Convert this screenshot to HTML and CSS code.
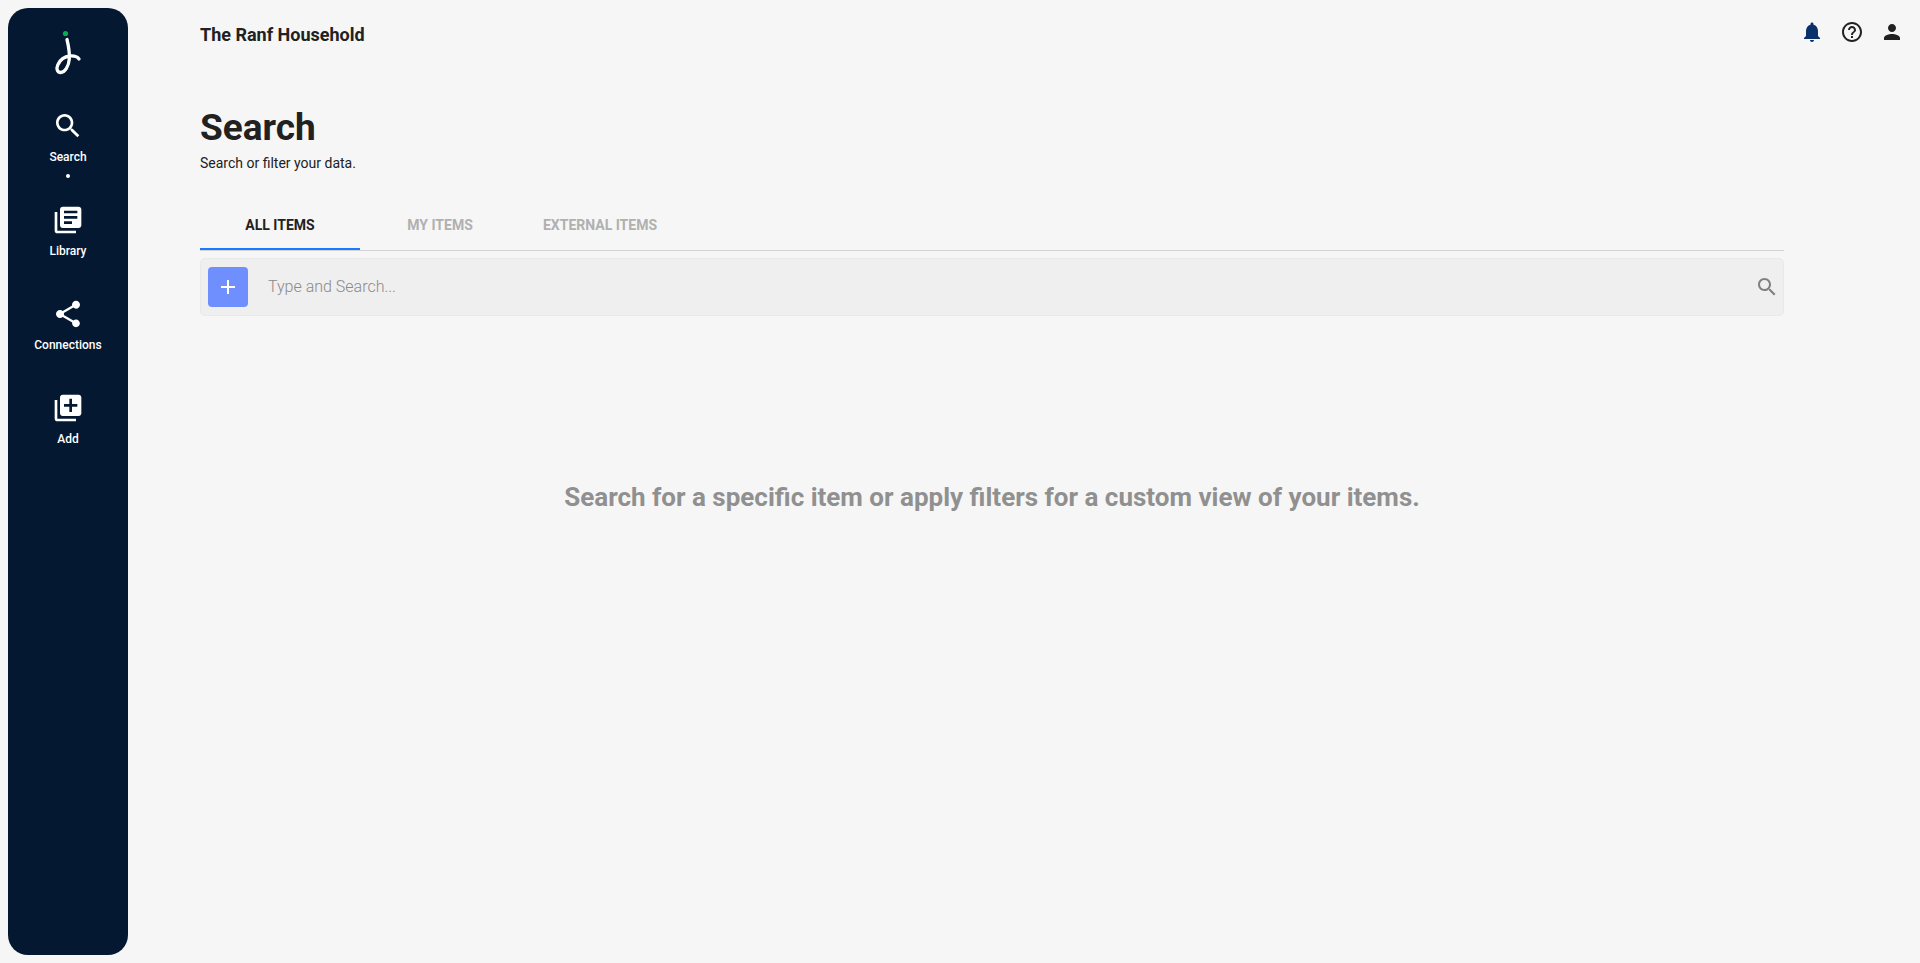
FILE: index.html
```html
<!DOCTYPE html>
<html lang="en">
<head>
<meta charset="utf-8">
<meta name="viewport" content="width=device-width, initial-scale=1">
<title>Search</title>
<link rel="stylesheet" href="styles.css">
</head>
<body>
<div class="app">
  <aside class="sidebar">
    <a class="logo" href="#" aria-label="Home">
      <svg viewBox="0 0 32 50" fill="none">
        <circle cx="13.5" cy="6.5" r="2.6" fill="#00b14f"/>
        <path d="M15 12.5C16.3 18 17.8 25 17.3 32C16.8 39 13 45.5 8.6 45.5C5 45.5 4.2 41.500 5.8 37.800C8 32.800 12.500 29.500 18 29C22 28.700 25.500 30 27 32" stroke="#fff" stroke-width="3.300" stroke-linecap="round"/>
      </svg>
    </a>
    <nav class="nav" aria-label="Main">
      <a class="nav-item active" href="#" aria-current="page">
        <svg class="nav-icon" viewBox="0 0 24 24"><path d="M15.500 14h-.79l-.28-.27C15.410 12.590 16 11.110 16 9.500 16 5.910 13.090 3 9.500 3S3 5.910 3 9.500 5.910 16 9.500 16c1.610 0 3.090-.59 4.230-1.570l.27.28v.79l5 4.990L20.490 19l-4.990-5zm-6 0C7.010 14 5 11.990 5 9.500S7.010 5 9.500 5 14 7.010 14 9.500 11.990 14 9.500 14z"/></svg>
        <span>Search</span>
      </a>
      <a class="nav-item" href="#">
        <svg class="nav-icon" viewBox="0 0 24 24"><path d="M4 6H2v14c0 1.100.9 2 2 2h14v-2H4V6zm16-4H8c-1.100 0-2 .9-2 2v12c0 1.100.9 2 2 2h12c1.100 0 2-.9 2-2V4c0-1.100-.9-2-2-2zm-1 9H9V9h10v2zm-4 4H9v-2h6v2zm4-8H9V5h10v2z"/></svg>
        <span>Library</span>
      </a>
      <a class="nav-item" href="#">
        <svg class="nav-icon" viewBox="0 0 24 24"><path d="M18 16.080c-.76 0-1.440.3-1.960.77L8.910 12.700c.05-.23.09-.46.09-.7s-.04-.47-.09-.7l7.050-4.110c.54.5 1.250.81 2.040.81 1.660 0 3-1.340 3-3s-1.340-3-3-3-3 1.340-3 3c0 .24.04.47.09.7L8.040 9.810C7.500 9.310 6.790 9 6 9c-1.660 0-3 1.340-3 3s1.340 3 3 3c.79 0 1.500-.31 2.040-.81l7.120 4.160c-.05.21-.08.43-.08.65 0 1.610 1.310 2.920 2.920 2.920s2.920-1.310 2.920-2.920-1.310-2.920-2.920-2.920z"/></svg>
        <span>Connections</span>
      </a>
      <a class="nav-item" href="#">
        <svg class="nav-icon" viewBox="0 0 24 24"><path d="M4 6H2v14c0 1.100.9 2 2 2h14v-2H4V6zm16-4H8c-1.100 0-2 .9-2 2v12c0 1.100.9 2 2 2h12c1.100 0 2-.9 2-2V4c0-1.100-.9-2-2-2zm-1 9h-4v4h-2v-4H9V9h4V5h2v4h4v2z"/></svg>
        <span>Add</span>
      </a>
    </nav>
  </aside>
  <div class="page">
    <header class="topbar">
      <div class="household">The Ranf Household</div>
      <div class="actions">
        <button class="icon-button bell" type="button" aria-label="Notifications"><svg viewBox="0 0 24 24"><path d="M12 22c1.100 0 2-.9 2-2h-4c0 1.100.89 2 2 2zm6-6v-5c0-3.070-1.640-5.640-4.500-6.320V4c0-.83-.67-1.500-1.500-1.500s-1.500.67-1.500 1.500v.68C7.630 5.360 6 7.920 6 11v5l-2 2v1h16v-1l-2-2z"/></svg></button>
        <button class="icon-button" type="button" aria-label="Help"><svg viewBox="0 0 24 24"><path d="M11 18h2v-2h-2v2zm1-16C6.480 2 2 6.480 2 12s4.480 10 10 10 10-4.480 10-10S17.520 2 12 2zm0 18c-4.410 0-8-3.590-8-8s3.590-8 8-8 8 3.590 8 8-3.590 8-8 8zm0-14c-2.210 0-4 1.790-4 4h2c0-1.100.9-2 2-2s2 .9 2 2c0 2-3 1.750-3 5h2c0-2.250 3-2.500 3-5 0-2.210-1.790-4-4-4z"/></svg></button>
        <button class="icon-button" type="button" aria-label="Account"><svg viewBox="0 0 24 24"><path d="M12 12c2.210 0 4-1.790 4-4s-1.790-4-4-4-4 1.790-4 4 1.790 4 4 4zm0 2c-2.670 0-8 1.340-8 4v2h16v-2c0-2.660-5.330-4-8-4z"/></svg></button>
      </div>
    </header>
    <main class="content">
      <h1 class="title">Search</h1>
      <p class="subtitle">Search or filter your data.</p>
      <div class="tabs" role="tablist">
        <button class="tab selected" type="button" role="tab" aria-selected="true">ALL ITEMS</button>
        <button class="tab" type="button" role="tab" aria-selected="false">MY ITEMS</button>
        <button class="tab" type="button" role="tab" aria-selected="false">EXTERNAL ITEMS</button>
      </div>
      <form class="searchbar">
        <button class="add-filter" type="button" aria-label="Add filter"><svg viewBox="0 0 24 24"><path d="M19 13h-6v6h-2v-6H5v-2h6V5h2v6h6v2z"/></svg></button>
        <input class="search-input" type="text" placeholder="Type and Search..." aria-label="Type and Search">
        <button class="search-button" type="submit" aria-label="Search"><svg viewBox="0 0 24 24"><path d="M15.500 14h-.79l-.28-.27C15.410 12.590 16 11.110 16 9.500 16 5.910 13.090 3 9.500 3S3 5.910 3 9.500 5.910 16 9.500 16c1.610 0 3.090-.59 4.230-1.570l.27.28v.79l5 4.990L20.490 19l-4.990-5zm-6 0C7.010 14 5 11.990 5 9.500S7.010 5 9.500 5 14 7.010 14 9.500 11.990 14 9.500 14z"/></svg></button>
      </form>
      <p class="empty">Search for a specific item or apply filters for a custom view of your items.</p>
    </main>
  </div>
</div>
</body>
</html>
```
FILE: styles.css
```css
*, *::before, *::after { box-sizing: border-box; }
body {
  margin: 0;
  background: #f6f6f6;
  color: #212121;
  font-family: Roboto, "Liberation Sans", sans-serif;
}
button {
  border: 0;
  padding: 0;
  background: none;
  color: inherit;
  font: inherit;
  cursor: pointer;
}
svg { display: block; fill: currentColor; }
.app { display: flex; min-height: 100vh; padding: 8px; }
.sidebar {
  flex: 0 0 120px;
  display: flex;
  flex-direction: column;
  align-items: center;
  padding-top: 19px;
  border-radius: 20px;
  background: #041832;
  color: #fff;
}
.logo svg { width: 32px; height: 50px; fill: none; }
.nav { display: flex; flex-direction: column; width: 100%; margin-top: 33px; }
.nav-item {
  display: flex;
  flex-direction: column;
  align-items: center;
  height: 94px;
  gap: 7px;
  color: #fff;
  font-size: 12px;
  font-weight: 500;
  line-height: 16px;
  text-decoration: none;
}
.nav-icon { width: 32px; height: 32px; }
.active::after {
  content: "";
  width: 4px;
  height: 4px;
  margin-top: 2px;
  border-radius: 50%;
  background: #fff;
}
.page { flex: 1; min-width: 0; }
.topbar {
  display: flex;
  align-items: center;
  justify-content: space-between;
  height: 48px;
  padding: 0 8px 0 72px;
}
.household { padding-top: 6px; font-size: 18px; font-weight: 700; line-height: 24px; }
.actions { display: flex; gap: 16px; }
.icon-button svg { width: 24px; height: 24px; }
.bell { color: #09306b; }
.content { padding: 48px 128px 0 72px; }
.title { margin: 0; font-size: 37px; font-weight: 700; line-height: 48px; }
.subtitle { margin: 1px 0 0; font-size: 14px; line-height: 20px; }
.tabs { display: flex; margin-top: 27px; border-bottom: 1px solid #d4d4d4; }
.tab {
  width: 160px;
  height: 50px;
  padding-top: 2px;
  border-bottom: 2px solid transparent;
  color: #b0b0b0;
  font-size: 14px;
  font-weight: 700;
}
.selected { border-color: #187bff; color: #212121; }
.searchbar {
  display: flex;
  align-items: center;
  margin-top: 7px;
  padding: 8px 4px 8px 7px;
  border: 1px solid #e9e9e9;
  border-radius: 5px;
  background: #efefef;
}
.add-filter {
  display: grid;
  place-items: center;
  width: 40px;
  height: 40px;
  border-radius: 4px;
  background: #708fff;
  color: #fff;
}
.add-filter svg { width: 24px; height: 24px; }
.search-input {
  flex: 1;
  min-width: 0;
  height: 40px;
  margin-left: 20px;
  padding: 0 0 2px;
  border: 0;
  outline: 0;
  background: transparent;
  color: #212121;
  font: 300 16px/24px Roboto, "Liberation Sans", sans-serif;
}
.search-input::placeholder { color: #8a8a8a; opacity: 1; }
.search-button { color: #808080; }
.search-button svg { width: 24px; height: 24px; }
.empty {
  margin: 165px 0 0;
  color: #909090;
  font-size: 26px;
  font-weight: 700;
  line-height: 32px;
  text-align: center;
}
```
